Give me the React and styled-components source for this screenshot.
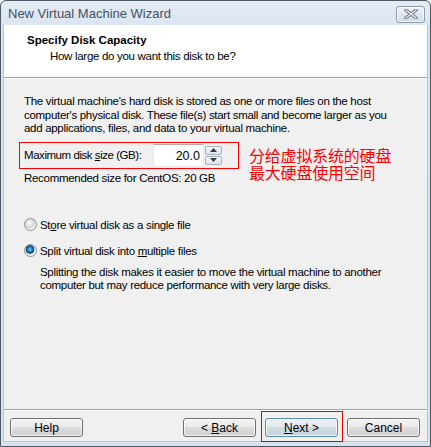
import React from 'react';
import styled, { createGlobalStyle } from 'styled-components';

const UI_FONT = '"Liberation Sans", Arial, sans-serif';

const GlobalStyle = createGlobalStyle`
  html, body {
    margin: 0;
    padding: 0;
    background: #ffffff;
  }
  body {
    font-family: ${UI_FONT};
    font-size: 11.5px;
    color: #000;
  }
`;

const Accel = ({ children }) => <U>{children}</U>;

const CloseIcon = () => (
  <svg width="14" height="10" viewBox="0 0 14 10">
    <path
      d="M2 1 L12 9 M12 1 L2 9"
      stroke="#6e7886"
      strokeWidth="3.2"
      strokeLinecap="square"
    />
    <path
      d="M2 1 L12 9 M12 1 L2 9"
      stroke="#f4f6f9"
      strokeWidth="1.2"
      strokeLinecap="square"
    />
  </svg>
);

const Arrow = ({ up }) => (
  <svg width="7" height="4" viewBox="0 0 7 4">
    <path d={up ? 'M0 4 L3.5 0 L7 4 Z' : 'M0 0 L3.5 4 L7 0 Z'} fill="#2d3b4f" />
  </svg>
);

export default function App() {
  return (
    <>
      <GlobalStyle />
      <Window>
        <TitleBar>
          <Title>New Virtual Machine Wizard</Title>
          <CloseButton>
            <CloseIcon />
          </CloseButton>
        </TitleBar>
        <Client>
          <Header>
            <HeaderTitle>Specify Disk Capacity</HeaderTitle>
            <HeaderSub>How large do you want this disk to be?</HeaderSub>
          </Header>
          <Body>
            <Para>
              The virtual machine's hard disk is stored as one or more files on the host
              <br />
              computer's physical disk. These file(s) start small and become larger as you
              <br />
              add applications, files, and data to your virtual machine.
            </Para>
            <SizeRow>
              <SizeBox>
                <Label>
                  Maximum disk <Accel>s</Accel>ize (GB):
                </Label>
                <NumberInput>20.0</NumberInput>
                <Spinner>
                  <SpinButton>
                    <Arrow up />
                  </SpinButton>
                  <SpinButton>
                    <Arrow />
                  </SpinButton>
                </Spinner>
              </SizeBox>
              <Note>
                <NoteLine>分给虚拟系统的硬盘</NoteLine>
                <NoteLine>最大硬盘使用空间</NoteLine>
              </Note>
            </SizeRow>
            <Recommended>Recommended size for CentOS: 20 GB</Recommended>
            <Options>
              <Option>
                <Radio />
                <span>
                  St<Accel>o</Accel>re virtual disk as a single file
                </span>
              </Option>
              <Option>
                <Radio $checked />
                <span>
                  Split virtual disk into <Accel>m</Accel>ultiple files
                </span>
              </Option>
              <OptionNote>
                Splitting the disk makes it easier to move the virtual machine to another
                <br />
                computer but may reduce performance with very large disks.
              </OptionNote>
            </Options>
          </Body>
          <Footer>
            <Button>Help</Button>
            <ButtonGroup>
              <Button>
                {'< '}
                <Accel>B</Accel>ack
              </Button>
              <Marked>
                <Button $default>
                  <Accel>N</Accel>
                  {'ext >'}
                </Button>
              </Marked>
              <Button>Cancel</Button>
            </ButtonGroup>
          </Footer>
        </Client>
      </Window>
    </>
  );
}

const Window = styled.div`
  box-sizing: border-box;
  width: 431px;
  height: 447px;
  display: flex;
  flex-direction: column;
  border: 1px solid #4e5866;
  border-radius: 6px 6px 0 0;
  background: linear-gradient(#e3ebf5, #d9e4f1 30px, #d6e2f0);
  padding: 0 2px 4px 2px;
  overflow: hidden;
`;

const TitleBar = styled.div`
  height: 24px;
  flex: none;
  display: flex;
  align-items: center;
  justify-content: space-between;
  padding: 0 3px 0 5px;
`;

const Title = styled.div`
  font-size: 13px;
  color: #44505f;
  padding-top: 1px;
`;

const CloseButton = styled.div`
  box-sizing: border-box;
  width: 29px;
  height: 17px;
  margin-top: 2px;
  border: 1px solid #8e9aa8;
  border-radius: 3px;
  background: linear-gradient(#eef2f7, #dfe6ee 50%, #d2dbe6);
  box-shadow: inset 0 0 0 1px rgba(255, 255, 255, 0.7);
  display: flex;
  align-items: center;
  justify-content: center;
`;

const Client = styled.div`
  flex: 1;
  display: flex;
  flex-direction: column;
  background: #f0f0f0;
  border-left: 1px solid #b9c4d1;
  border-right: 1px solid #b9c4d1;
  border-bottom: 1px solid #b9c4d1;
`;

const Header = styled.div`
  height: 52px;
  flex: none;
  background: #ffffff;
  border-bottom: 1px solid #a0a0a0;
  box-shadow: 0 1px 0 #ffffff;
  padding: 0 0 0 23px;
`;

const HeaderTitle = styled.div`
  font-weight: bold;
  font-size: 11.5px;
  margin-top: 8px;
  line-height: 15px;
`;

const HeaderSub = styled.div`
  margin: 1px 0 0 23px;
  line-height: 15px;
  letter-spacing: -0.3px;
`;

const Body = styled.div`
  flex: 1;
  padding: 16px 10px 0 20px;
  margin-top: 1px;
`;

const Para = styled.p`
  margin: 0;
  line-height: 13.5px;
  letter-spacing: -0.3px;
  white-space: nowrap;
`;

const SizeRow = styled.div`
  display: flex;
  align-items: flex-start;
  height: 27px;
  margin-top: 6px;
  margin-left: -5px;
`;

const SizeBox = styled.div`
  box-sizing: border-box;
  width: 220px;
  height: 27px;
  border: 1px solid #ff0000;
  display: flex;
  align-items: center;
  padding-left: 4px;
`;

const Label = styled.span`
  width: 129px;
  letter-spacing: -0.45px;
`;

const U = styled.span`
  text-decoration: underline;
  text-underline-offset: 1px;
`;

const NumberInput = styled.div`
  box-sizing: border-box;
  width: 51px;
  height: 23px;
  background: #ffffff;
  border: 1px solid #e3e9ef;
  border-top-color: #abadb3;
  text-align: right;
  padding: 4px 3px 0 0;
  font-size: 12.5px;
`;

const Spinner = styled.div`
  display: flex;
  flex-direction: column;
  gap: 1px;
  margin-left: 1px;
`;

const SpinButton = styled.div`
  box-sizing: border-box;
  width: 17px;
  height: 9px;
  border: 1px solid #a7b2be;
  border-radius: 2px;
  background: linear-gradient(#f4f6f8, #dde3ea);
  display: flex;
  align-items: center;
  justify-content: center;
`;

const Note = styled.div`
  font-family: "Noto Sans CJK SC", sans-serif;
  font-size: 16px;
  color: #ff0000;
  margin: 5px 0 0 10px;
  letter-spacing: -0.2px;
`;

const NoteLine = styled.div`
  height: 17px;
  line-height: 17px;
`;

const Recommended = styled.div`
  margin-top: 2px;
  line-height: 14px;
  letter-spacing: -0.3px;
`;

const Options = styled.div`
  margin-top: 33px;
  display: flex;
  flex-direction: column;
`;

const Option = styled.div`
  display: flex;
  align-items: center;
  gap: 3px;
  height: 14px;
  margin-bottom: 12px;
  letter-spacing: -0.3px;
`;

const Radio = styled.span`
  box-sizing: border-box;
  width: 13px;
  height: 13px;
  border-radius: 50%;
  border: 1px solid #8e8f8f;
  background: ${({ $checked }) =>
    $checked
      ? 'radial-gradient(circle at 45% 40%, #7fd0f7 0, #1b7bc0 2.5px, #0e3f70 4px, #dcdcdc 4.6px, #f7f7f7 6px)'
      : 'radial-gradient(circle at 40% 35%, #ffffff 0, #e4e4e4 3px, #cfcfcf 5px, #f4f4f4 6px)'};
  flex: none;
`;

const OptionNote = styled.p`
  margin: -4px 0 0 16px;
  line-height: 13px;
  letter-spacing: -0.3px;
  white-space: nowrap;
`;

const Footer = styled.div`
  box-sizing: border-box;
  flex: none;
  height: 32px;
  border-top: 1px solid #a0a0a0;
  box-shadow: inset 0 1px 0 #ffffff;
  display: flex;
  align-items: flex-start;
  justify-content: space-between;
  padding: 8px 7px 0 6px;
`;

const ButtonGroup = styled.div`
  display: flex;
  gap: 9px;
`;

const Button = styled.div`
  box-sizing: border-box;
  width: 73px;
  height: 19px;
  border: 1px solid ${({ $default }) => ($default ? '#5a8bb0' : '#707070')};
  border-radius: 3px;
  background: ${({ $default }) =>
    $default
      ? 'linear-gradient(#eaf1f5, #e2ebf0 45%, #cfdbe3 50%, #c6d3dc)'
      : 'linear-gradient(#f2f2f2, #ebebeb 45%, #dddddd 50%, #cfcfcf)'};
  box-shadow: inset 0 0 0 1px rgba(255, 255, 255, 0.75);
  display: flex;
  align-items: center;
  justify-content: center;
  font-size: 12px;
  white-space: pre;
`;

const Marked = styled.div`
  position: relative;

  &::after {
    content: '';
    position: absolute;
    inset: -7px -5px -5px -4px;
    border: 1px solid #e00000;
    pointer-events: none;
  }
`;
